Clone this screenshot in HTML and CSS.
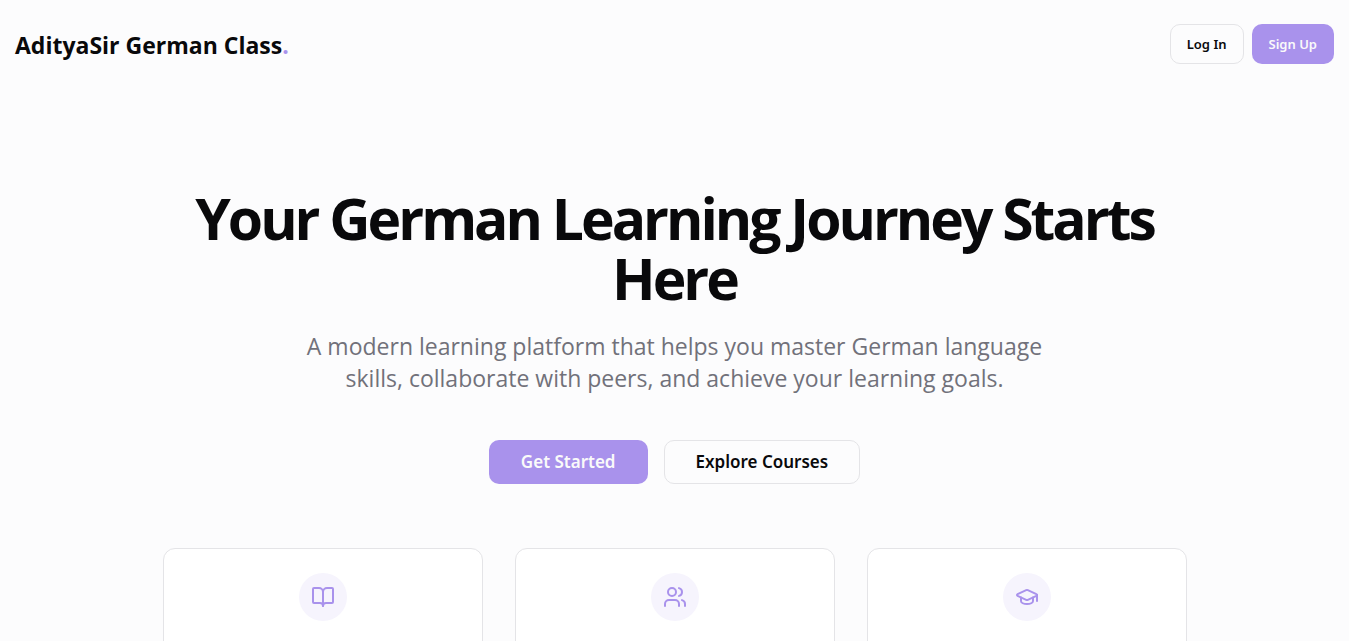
FILE: index.html
```html
<!DOCTYPE html>
<html lang="en">
<head>
<meta charset="utf-8">
<meta name="viewport" content="width=device-width, initial-scale=1">
<title>AdityaSir German Class</title>
<link rel="stylesheet" href="styles.css">
</head>
<body>
<header class="site-header">
  <a class="brand" href="#">AdityaSir German Class<span class="brand-dot">.</span></a>
  <nav class="actions">
    <button class="btn btn-outline" type="button">Log In</button>
    <button class="btn btn-primary" type="button">Sign Up</button>
  </nav>
</header>
<main class="hero">
  <h1 class="hero-title">Your German Learning Journey Starts Here</h1>
  <p class="hero-text">A modern learning platform that helps you master German language skills, collaborate with peers, and achieve your learning goals.</p>
  <div class="hero-actions">
    <button class="btn btn-large btn-primary" type="button">Get Started</button>
    <button class="btn btn-large btn-outline" type="button">Explore Courses</button>
  </div>
  <section class="features">
    <article class="card"><span class="card-icon">
      <svg class="icon" viewBox="0 0 24 24" aria-hidden="true"><path d="M12 7v14"/><path d="M3 18a1 1 0 0 1-1-1V4a1 1 0 0 1 1-1h5a4 4 0 0 1 4 4 4 4 0 0 1 4-4h5a1 1 0 0 1 1 1v13a1 1 0 0 1-1 1h-6a3 3 0 0 0-3 3 3 3 0 0 0-3-3z"/></svg>
    </span></article>
    <article class="card"><span class="card-icon">
      <svg class="icon" viewBox="0 0 24 24" aria-hidden="true"><path d="M16 21v-2a4 4 0 0 0-4-4H6a4 4 0 0 0-4 4v2"/><circle cx="9" cy="7" r="4"/><path d="M22 21v-2a4 4 0 0 0-3-3.87"/><path d="M16 3.13a4 4 0 0 1 0 7.75"/></svg>
    </span></article>
    <article class="card"><span class="card-icon">
      <svg class="icon" viewBox="0 0 24 24" aria-hidden="true"><path d="M21.42 10.922a1 1 0 0 0-.019-1.838L12.83 5.18a2 2 0 0 0-1.66 0L2.6 9.08a1 1 0 0 0 0 1.832l8.57 3.908a2 2 0 0 0 1.66 0z"/><path d="M22 10v6"/><path d="M6 12.5V16a6 3 0 0 0 12 0v-3.5"/></svg>
    </span></article>
  </section>
</main>
</body>
</html>
```
FILE: styles.css
```css
* { box-sizing: border-box; }
body {
  margin: 0;
  background: #fcfcfd;
  color: #09090b;
  font-family: "Segoe UI", "Open Sans", "Noto Sans", sans-serif;
}
.site-header {
  display: flex;
  align-items: center;
  justify-content: space-between;
  padding: 24px 15px;
}
.brand {
  padding-top: 2px;
  color: inherit;
  font-size: 23px;
  line-height: 32px;
  font-weight: 700;
  text-decoration: none;
}
.brand-dot { color: #a992ec; }
.actions { display: flex; gap: 8px; }
.btn {
  height: 40px;
  padding: 0 16px;
  border: 1px solid transparent;
  border-radius: 10px;
  font-family: "Segoe UI", "Noto Sans", "Open Sans", sans-serif;
  font-size: 13px;
  line-height: 20px;
  font-weight: 600;
  white-space: nowrap;
  cursor: pointer;
}
.btn-primary { background: #a992ec; color: #fafafa; }
.btn-outline { background: #fcfcfd; border-color: #e4e4e7; color: #09090b; }
.btn-large { height: 44px; padding: 0 31px; font-size: 17px; line-height: 28px; }
.hero {
  max-width: 1024px;
  margin: 0 auto;
  padding-top: 100px;
  text-align: center;
}
.hero-title {
  margin: 0 0 22px;
  font-size: 57px;
  line-height: 60px;
  font-weight: 700;
  letter-spacing: -3px;
}
.hero-text {
  max-width: 768px;
  margin: 0 auto 46px;
  color: #71717a;
  font-size: 23px;
  line-height: 32px;
}
.hero-actions { display: flex; justify-content: center; gap: 16px; margin-bottom: 64px; }
.features { display: grid; grid-template-columns: repeat(3, 1fr); gap: 32px; }
.card {
  display: flex;
  justify-content: center;
  align-items: flex-start;
  min-height: 192px;
  padding: 24px;
  border: 1px solid #e4e4e7;
  border-radius: 12px;
  background: #fff;
}
.card-icon {
  display: grid;
  place-items: center;
  width: 48px;
  height: 48px;
  border-radius: 50%;
  background: #f6f4fd;
}
.icon {
  width: 24px;
  height: 24px;
  fill: none;
  stroke: #a992ec;
  stroke-width: 2;
  stroke-linecap: round;
  stroke-linejoin: round;
}
```
